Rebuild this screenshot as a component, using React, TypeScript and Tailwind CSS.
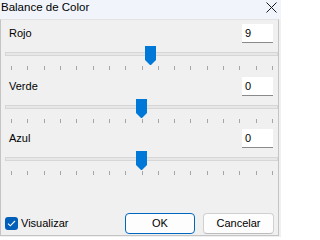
import React from 'react';

const FONT = { fontFamily: '"Liberation Sans", Arial, sans-serif' };

const channels = [
    { label: 'Rojo', value: '9', thumb: 144, height: 'h-[53px]' },
    { label: 'Verde', value: '0', thumb: 135, height: 'h-[52px]' },
    { label: 'Azul', value: '0', thumb: 135, height: 'h-[52px]' },
];

const Thumb: React.FC = () => (
    <svg width="11" height="19" viewBox="0 0 11 19" className="block">
        <polygon points="0,0 11,0 11,14 6,19 5,19 0,14" fill="#0078d7" />
    </svg>
);

const Ticks: React.FC = () => (
    <div className="flex justify-between ml-[10px] w-[262px] h-[4px]">
        {Array.from({ length: 17 }).map((_, i) => (
            <span key={i} className="w-px h-[4px] bg-[#a6a6a6]"></span>
        ))}
    </div>
);

const Channel: React.FC<{ label: string; value: string; thumb: number; height: string }> = ({ label, value, thumb, height }) => (
    <div className={height}>
        <div className="flex items-center justify-between h-[19px] pl-[8px] pr-[5px]">
            <span className="text-[11px] text-black">{label}</span>
            <div className="w-[31px] h-[19px] bg-white border-b border-[#8a8a8a] pl-[3px] flex items-center text-[11px] text-black">
                {value}
            </div>
        </div>
        <div className="relative h-[23px]">
            <div className="absolute left-[4px] top-[9px] w-[273px] h-[4px] bg-[#e7e7e7] border border-[#d6d6d6]"></div>
            <div className="absolute top-[3px]" style={{ left: thumb }}>
                <Thumb />
            </div>
        </div>
        <Ticks />
    </div>
);

export default function App() {
    return (
        <div className="w-[281px] h-[237px] bg-[#f0f0f0] overflow-hidden" style={FONT}>
            <div className="flex justify-between items-start h-[19px] bg-[#f1f5fb]">
                <span className="pl-[1px] text-[11.5px] leading-[15px] text-black">Balance de Color</span>
                <svg width="11" height="11" viewBox="0 0 11 11" className="mt-[2px] mr-[4px]">
                    <path d="M0.5 0.5 L10.5 10.5 M10.5 0.5 L0.5 10.5" stroke="#1a1a1a" strokeWidth="1" />
                </svg>
            </div>
            <div className="w-[279px] h-[217px] border-l border-r border-b border-t border-[#c4c4c4] border-t-[#e2e2e2] flex flex-col pt-[4px]">
                {channels.map((c) => (
                    <Channel key={c.label} {...c} />
                ))}
                <div className="flex items-center mt-auto mb-[1px] pl-[4px] pr-[4px] h-[21px]">
                    <span className="w-[13px] h-[13px] rounded-[3px] bg-[#005fb8] flex items-center justify-center">
                        <svg width="9" height="7" viewBox="0 0 9 7">
                            <path d="M1 3.6 L3.3 5.8 L8 1" stroke="white" strokeWidth="1.1" fill="none" />
                        </svg>
                    </span>
                    <span className="ml-[3px] text-[11px] text-black">Visualizar</span>
                    <div className="ml-auto flex gap-[8px]">
                        <button className="w-[70px] h-[21px] rounded-[4px] bg-[#fdfdfd] border border-[#0067c0] text-[11px] text-black">
                            OK
                        </button>
                        <button className="w-[71px] h-[21px] rounded-[4px] bg-[#fdfdfd] border border-[#d0d0d0] border-b-[#bcbcbc] text-[11px] text-black">
                            Cancelar
                        </button>
                    </div>
                </div>
            </div>
        </div>
    );
}
